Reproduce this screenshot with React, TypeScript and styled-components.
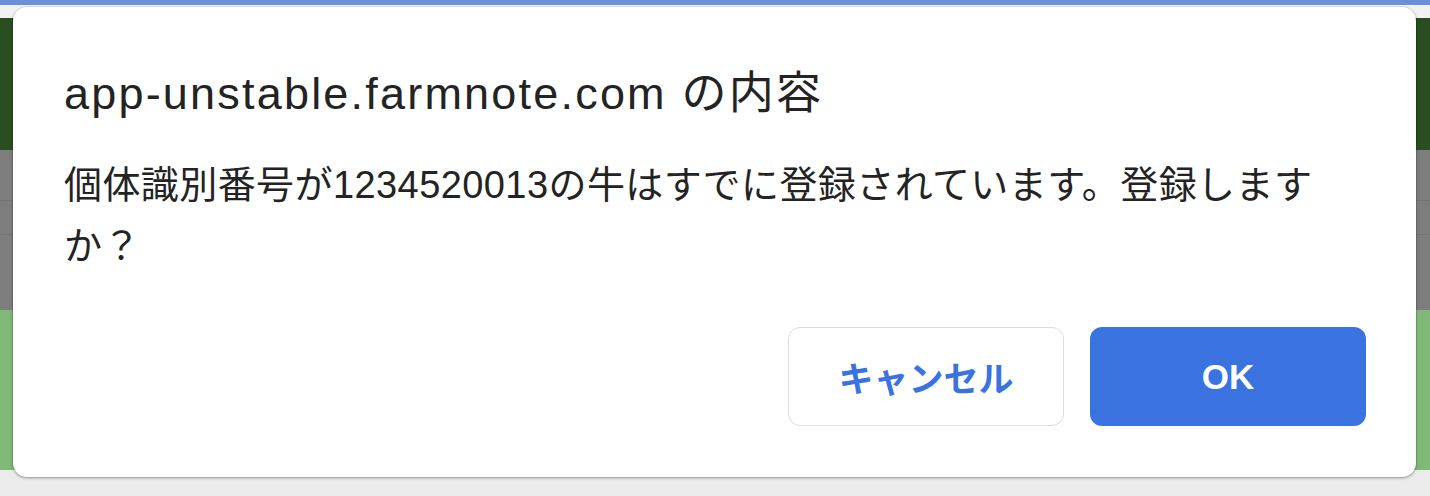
import React from "react";
import styled, { createGlobalStyle } from "styled-components";

const GlobalStyle = createGlobalStyle`
  html, body { margin: 0; padding: 0; }
  body {
    width: 1430px;
    height: 496px;
    overflow: hidden;
    background: #ececec;
    font-family: "Liberation Sans", "Noto Sans CJK JP", sans-serif;
  }
`;

const Page = styled.div`
  position: relative;
  width: 1430px;
  height: 496px;
  display: flex;
  flex-direction: column;
  overflow: hidden;
`;

const Band = styled.div<{ $h: number; $bg: string }>`
  height: ${(p) => p.$h}px;
  flex: none;
  background: ${(p) => p.$bg};
`;

const GrayBand = styled.div`
  height: 160px;
  flex: none;
  background: #7d7d7d;
  display: flex;
  flex-direction: column;
`;

const GrayRow = styled.div<{ $h: number }>`
  height: ${(p) => p.$h}px;
  flex: none;
  border-bottom: 1px solid #737373;
`;

const Overlay = styled.div`
  position: absolute;
  left: 13px;
  top: 7px;
  width: 1403px;
  height: 470px;
  box-sizing: border-box;
  background: #ffffff;
  border-radius: 14px;
  box-shadow: 0 1px 3px rgba(0, 0, 0, 0.35), 0 0 0 1px rgba(0, 0, 0, 0.06);
  padding: 57px 50px 0 51px;
  display: flex;
  flex-direction: column;
`;

const Title = styled.div`
  font-size: 45px;
  line-height: 60px;
  color: #232323;
  letter-spacing: 2.2px;
`;

const Message = styled.div`
  margin-top: 31px;
  font-size: 38px;
  line-height: 61px;
  letter-spacing: 0.42px;
  color: #232323;
`;

const Actions = styled.div`
  margin-top: 50px;
  display: flex;
  justify-content: flex-end;
  gap: 26px;
`;

const Button = styled.button<{ $primary?: boolean }>`
  width: 276px;
  height: 99px;
  box-sizing: border-box;
  border-radius: 12px;
  font-family: "Liberation Sans", "Noto Sans CJK JP", sans-serif;
  font-size: 35px;
  font-weight: 700;
  cursor: pointer;
  border: ${(p) => (p.$primary ? "none" : "1.5px solid #dcdcdc")};
  background: ${(p) => (p.$primary ? "#3a73df" : "#ffffff")};
  color: ${(p) => (p.$primary ? "#ffffff" : "#3a73df")};
`;

export default function App() {
  return (
    <>
      <GlobalStyle />
      <Page>
        <Band $h={5} $bg="#6b90d8" />
        <Band $h={13} $bg="#f2f2f2" />
        <Band $h={132} $bg="#2b4d22" />
        <GrayBand>
          <GrayRow $h={50} />
          <GrayRow $h={33} />
          <GrayRow $h={76} />
        </GrayBand>
        <Band $h={160} $bg="#80b977" />
        <Band $h={26} $bg="#ebebeb" />
        <Overlay>
          <Title>app-unstable.farmnote.com の内容</Title>
          <Message>
            個体識別番号が1234520013の牛はすでに登録されています。登録しますか？
          </Message>
          <Actions>
            <Button>キャンセル</Button>
            <Button $primary>OK</Button>
          </Actions>
        </Overlay>
      </Page>
    </>
  );
}
